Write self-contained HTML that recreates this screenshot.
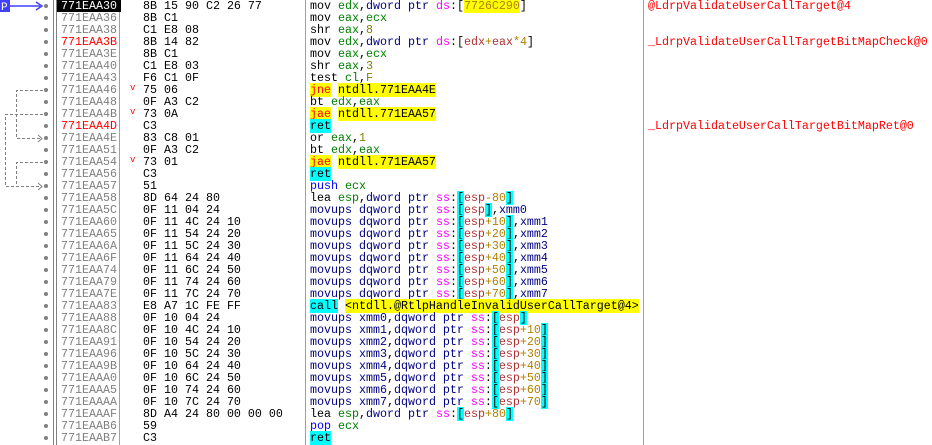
<!DOCTYPE html>
<html><head><meta charset="utf-8"><style>
body{margin:0;width:932px;height:445px;background:#fff;overflow:hidden;position:relative;font-family:"Liberation Mono",monospace;font-size:11.67px;}
.r{position:absolute;left:0;width:932px;height:12px;line-height:12px;white-space:pre;}
.r span{white-space:pre}
.dot{position:absolute;left:44px;top:4px;width:4px;height:4px;border-radius:2px;background:#808080}
.a{position:absolute;left:61px;color:#808080}
.b{position:absolute;left:143px;color:#000}
.d{position:absolute;left:310px;color:#000}
.c{position:absolute;left:648px;color:#ff0000}
.v{position:absolute;left:130px;top:-2px;color:#ff0000;font-size:9px}
.vl{position:absolute;top:0;height:445px;width:1px;background:#808080}
.g{color:#008000}.n{color:#808000}.m{color:#ff00ff}.p{color:#000080}.x{color:#000080}
.mr{color:#b03030}.mo{color:#b08000}.cy{background:#00ffff}.ye{background:#ffff00}
.j{color:#ff0000;background:#ffff00}.bl{color:#0000ff}.mu{color:#000080}
.red{color:#ff0000}
</style></head><body>
<div class="vl" style="left:53px"></div><div class="vl" style="left:56px"></div>
<div class="vl" style="left:119px;background:#a0a0a0"></div>
<div class="vl" style="left:305px;background:#a0a0a0"></div>
<div class="vl" style="left:643px;background:#a0a0a0"></div>
<svg style="position:absolute;left:0;top:0" width="60" height="445">
<rect x="0" y="0" width="10" height="12" fill="#4040ff"/>
<text x="1" y="10" fill="#fff" font-family="Liberation Mono" font-size="11">P</text>
<line x1="10" y1="6" x2="40" y2="6" stroke="#4040ff" stroke-width="1.5"/>
<path d="M36 2 L42 6 L36 10" fill="none" stroke="#4040ff" stroke-width="1.5"/>
<g fill="none" stroke="#808080" stroke-dasharray="3,2">
<path d="M43 90.5 H16.5 V138.5 H42"/>
<path d="M43 114.5 H5.5 V186.5 H42"/>
<path d="M43 162.5 H16.5 V186.5 H42"/>
</g>
<g fill="none" stroke="#808080"><path d="M38 135 L42 138.5 L38 142"/><path d="M38 183 L42 186.5 L38 190"/></g>
</svg>
<div class="r" style="top:0"><i class="dot"></i><span class="a" style="left:57px;width:60px;background:#000;color:#fff;padding-left:4px">771EAA30</span><span class="b">8B 15 90 C2 26 77</span><span class="d">mov <span class="g">edx</span>,<span class="p">dword ptr</span> <span class="m">ds</span>:[<span class="ye mo">7726C290</span>]</span><span class="c">@LdrpValidateUserCallTarget@4</span></div>
<div class="r" style="top:12px"><i class="dot"></i><span class="a">771EAA36</span><span class="b">8B C1</span><span class="d">mov <span class="g">eax</span>,<span class="g">ecx</span></span></div>
<div class="r" style="top:24px"><i class="dot"></i><span class="a">771EAA38</span><span class="b">C1 E8 08</span><span class="d">shr <span class="g">eax</span>,<span class="n">8</span></span></div>
<div class="r" style="top:36px"><i class="dot"></i><span class="a red">771EAA3B</span><span class="b">8B 14 82</span><span class="d">mov <span class="g">edx</span>,<span class="p">dword ptr</span> <span class="m">ds</span>:[<span class="mr">edx</span><span class="mo">+</span><span class="mr">eax</span><span class="mo">*4</span>]</span><span class="c">_LdrpValidateUserCallTargetBitMapCheck@0</span></div>
<div class="r" style="top:48px"><i class="dot"></i><span class="a">771EAA3E</span><span class="b">8B C1</span><span class="d">mov <span class="g">eax</span>,<span class="g">ecx</span></span></div>
<div class="r" style="top:60px"><i class="dot"></i><span class="a">771EAA40</span><span class="b">C1 E8 03</span><span class="d">shr <span class="g">eax</span>,<span class="n">3</span></span></div>
<div class="r" style="top:72px"><i class="dot"></i><span class="a">771EAA43</span><span class="b">F6 C1 0F</span><span class="d">test <span class="g">cl</span>,<span class="n">F</span></span></div>
<div class="r" style="top:84px"><i class="dot"></i><span class="a">771EAA46</span><span class="v">v</span><span class="b">75 06</span><span class="d"><span class="j">jne</span> <span class="ye">ntdll.771EAA4E</span></span></div>
<div class="r" style="top:96px"><i class="dot"></i><span class="a">771EAA48</span><span class="b">0F A3 C2</span><span class="d">bt <span class="g">edx</span>,<span class="g">eax</span></span></div>
<div class="r" style="top:108px"><i class="dot"></i><span class="a">771EAA4B</span><span class="v">v</span><span class="b">73 0A</span><span class="d"><span class="j">jae</span> <span class="ye">ntdll.771EAA57</span></span></div>
<div class="r" style="top:120px"><i class="dot"></i><span class="a red">771EAA4D</span><span class="b">C3</span><span class="d"><span class="cy">ret</span></span><span class="c">_LdrpValidateUserCallTargetBitMapRet@0</span></div>
<div class="r" style="top:132px"><i class="dot"></i><span class="a">771EAA4E</span><span class="b">83 C8 01</span><span class="d">or <span class="g">eax</span>,<span class="n">1</span></span></div>
<div class="r" style="top:144px"><i class="dot"></i><span class="a">771EAA51</span><span class="b">0F A3 C2</span><span class="d">bt <span class="g">edx</span>,<span class="g">eax</span></span></div>
<div class="r" style="top:156px"><i class="dot"></i><span class="a">771EAA54</span><span class="v">v</span><span class="b">73 01</span><span class="d"><span class="j">jae</span> <span class="ye">ntdll.771EAA57</span></span></div>
<div class="r" style="top:168px"><i class="dot"></i><span class="a">771EAA56</span><span class="b">C3</span><span class="d"><span class="cy">ret</span></span></div>
<div class="r" style="top:180px"><i class="dot"></i><span class="a">771EAA57</span><span class="b">51</span><span class="d"><span class="bl">push</span> <span class="g">ecx</span></span></div>
<div class="r" style="top:192px"><i class="dot"></i><span class="a">771EAA58</span><span class="b">8D 64 24 80</span><span class="d">lea <span class="g">esp</span>,<span class="p">dword ptr</span> <span class="m">ss</span>:<span class="cy">[</span><span class="mr">esp</span><span class="mo">-80</span><span class="cy">]</span></span></div>
<div class="r" style="top:204px"><i class="dot"></i><span class="a">771EAA5C</span><span class="b">0F 11 04 24</span><span class="d"><span class="mu">movups</span> <span class="p">dqword ptr</span> <span class="m">ss</span>:<span class="cy">[</span><span class="mr">esp</span><span class="cy">]</span>,<span class="x">xmm0</span></span></div>
<div class="r" style="top:216px"><i class="dot"></i><span class="a">771EAA60</span><span class="b">0F 11 4C 24 10</span><span class="d"><span class="mu">movups</span> <span class="p">dqword ptr</span> <span class="m">ss</span>:<span class="cy">[</span><span class="mr">esp</span><span class="mo">+10</span><span class="cy">]</span>,<span class="x">xmm1</span></span></div>
<div class="r" style="top:228px"><i class="dot"></i><span class="a">771EAA65</span><span class="b">0F 11 54 24 20</span><span class="d"><span class="mu">movups</span> <span class="p">dqword ptr</span> <span class="m">ss</span>:<span class="cy">[</span><span class="mr">esp</span><span class="mo">+20</span><span class="cy">]</span>,<span class="x">xmm2</span></span></div>
<div class="r" style="top:240px"><i class="dot"></i><span class="a">771EAA6A</span><span class="b">0F 11 5C 24 30</span><span class="d"><span class="mu">movups</span> <span class="p">dqword ptr</span> <span class="m">ss</span>:<span class="cy">[</span><span class="mr">esp</span><span class="mo">+30</span><span class="cy">]</span>,<span class="x">xmm3</span></span></div>
<div class="r" style="top:252px"><i class="dot"></i><span class="a">771EAA6F</span><span class="b">0F 11 64 24 40</span><span class="d"><span class="mu">movups</span> <span class="p">dqword ptr</span> <span class="m">ss</span>:<span class="cy">[</span><span class="mr">esp</span><span class="mo">+40</span><span class="cy">]</span>,<span class="x">xmm4</span></span></div>
<div class="r" style="top:264px"><i class="dot"></i><span class="a">771EAA74</span><span class="b">0F 11 6C 24 50</span><span class="d"><span class="mu">movups</span> <span class="p">dqword ptr</span> <span class="m">ss</span>:<span class="cy">[</span><span class="mr">esp</span><span class="mo">+50</span><span class="cy">]</span>,<span class="x">xmm5</span></span></div>
<div class="r" style="top:276px"><i class="dot"></i><span class="a">771EAA79</span><span class="b">0F 11 74 24 60</span><span class="d"><span class="mu">movups</span> <span class="p">dqword ptr</span> <span class="m">ss</span>:<span class="cy">[</span><span class="mr">esp</span><span class="mo">+60</span><span class="cy">]</span>,<span class="x">xmm6</span></span></div>
<div class="r" style="top:288px"><i class="dot"></i><span class="a">771EAA7E</span><span class="b">0F 11 7C 24 70</span><span class="d"><span class="mu">movups</span> <span class="p">dqword ptr</span> <span class="m">ss</span>:<span class="cy">[</span><span class="mr">esp</span><span class="mo">+70</span><span class="cy">]</span>,<span class="x">xmm7</span></span></div>
<div class="r" style="top:300px"><i class="dot"></i><span class="a">771EAA83</span><span class="b">E8 A7 1C FE FF</span><span class="d"><span class="cy">call</span> <span class="ye">&lt;ntdll.@RtlpHandleInvalidUserCallTarget@4&gt;</span></span></div>
<div class="r" style="top:312px"><i class="dot"></i><span class="a">771EAA88</span><span class="b">0F 10 04 24</span><span class="d"><span class="mu">movups</span> <span class="x">xmm0</span>,<span class="p">dqword ptr</span> <span class="m">ss</span>:<span class="cy">[</span><span class="mr">esp</span><span class="cy">]</span></span></div>
<div class="r" style="top:324px"><i class="dot"></i><span class="a">771EAA8C</span><span class="b">0F 10 4C 24 10</span><span class="d"><span class="mu">movups</span> <span class="x">xmm1</span>,<span class="p">dqword ptr</span> <span class="m">ss</span>:<span class="cy">[</span><span class="mr">esp</span><span class="mo">+10</span><span class="cy">]</span></span></div>
<div class="r" style="top:336px"><i class="dot"></i><span class="a">771EAA91</span><span class="b">0F 10 54 24 20</span><span class="d"><span class="mu">movups</span> <span class="x">xmm2</span>,<span class="p">dqword ptr</span> <span class="m">ss</span>:<span class="cy">[</span><span class="mr">esp</span><span class="mo">+20</span><span class="cy">]</span></span></div>
<div class="r" style="top:348px"><i class="dot"></i><span class="a">771EAA96</span><span class="b">0F 10 5C 24 30</span><span class="d"><span class="mu">movups</span> <span class="x">xmm3</span>,<span class="p">dqword ptr</span> <span class="m">ss</span>:<span class="cy">[</span><span class="mr">esp</span><span class="mo">+30</span><span class="cy">]</span></span></div>
<div class="r" style="top:360px"><i class="dot"></i><span class="a">771EAA9B</span><span class="b">0F 10 64 24 40</span><span class="d"><span class="mu">movups</span> <span class="x">xmm4</span>,<span class="p">dqword ptr</span> <span class="m">ss</span>:<span class="cy">[</span><span class="mr">esp</span><span class="mo">+40</span><span class="cy">]</span></span></div>
<div class="r" style="top:372px"><i class="dot"></i><span class="a">771EAAA0</span><span class="b">0F 10 6C 24 50</span><span class="d"><span class="mu">movups</span> <span class="x">xmm5</span>,<span class="p">dqword ptr</span> <span class="m">ss</span>:<span class="cy">[</span><span class="mr">esp</span><span class="mo">+50</span><span class="cy">]</span></span></div>
<div class="r" style="top:384px"><i class="dot"></i><span class="a">771EAAA5</span><span class="b">0F 10 74 24 60</span><span class="d"><span class="mu">movups</span> <span class="x">xmm6</span>,<span class="p">dqword ptr</span> <span class="m">ss</span>:<span class="cy">[</span><span class="mr">esp</span><span class="mo">+60</span><span class="cy">]</span></span></div>
<div class="r" style="top:396px"><i class="dot"></i><span class="a">771EAAAA</span><span class="b">0F 10 7C 24 70</span><span class="d"><span class="mu">movups</span> <span class="x">xmm7</span>,<span class="p">dqword ptr</span> <span class="m">ss</span>:<span class="cy">[</span><span class="mr">esp</span><span class="mo">+70</span><span class="cy">]</span></span></div>
<div class="r" style="top:408px"><i class="dot"></i><span class="a">771EAAAF</span><span class="b">8D A4 24 80 00 00 00</span><span class="d">lea <span class="g">esp</span>,<span class="p">dword ptr</span> <span class="m">ss</span>:<span class="cy">[</span><span class="mr">esp</span><span class="mo">+80</span><span class="cy">]</span></span></div>
<div class="r" style="top:420px"><i class="dot"></i><span class="a">771EAAB6</span><span class="b">59</span><span class="d"><span class="bl">pop</span> <span class="g">ecx</span></span></div>
<div class="r" style="top:432px"><i class="dot"></i><span class="a">771EAAB7</span><span class="b">C3</span><span class="d"><span class="cy">ret</span></span></div>
</body></html>
